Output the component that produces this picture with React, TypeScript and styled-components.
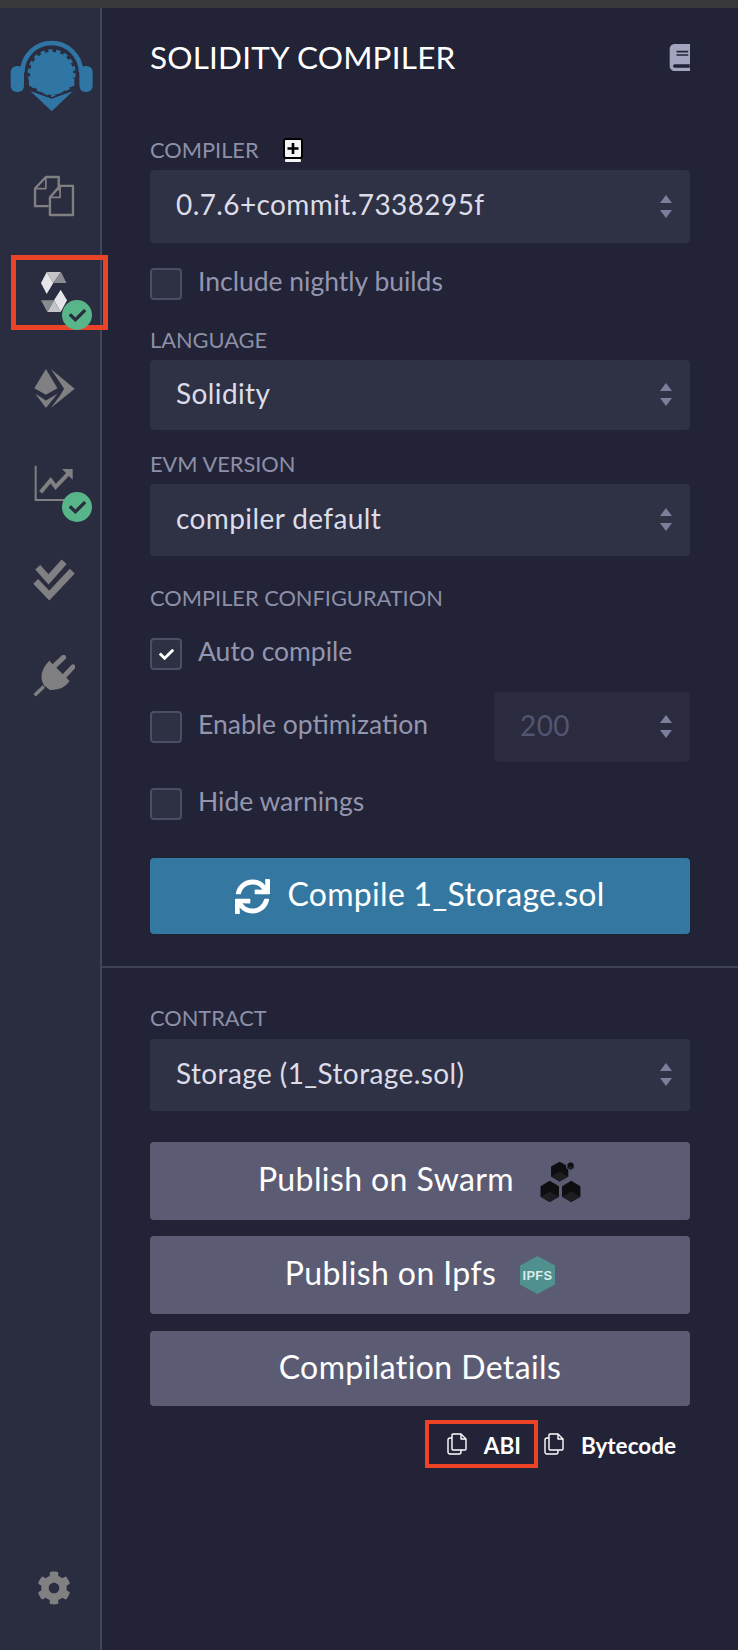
import React from 'react';
import styled, { createGlobalStyle } from 'styled-components';
import { FaBook, FaCheck, FaCog, FaSync } from 'react-icons/fa';

const GlobalStyle = createGlobalStyle`
  html, body {
    margin: 0;
    padding: 0;
    background: #222336;
  }
  * {
    box-sizing: border-box;
  }
`;

const Page = styled.div`
  width: 738px;
  height: 1650px;
  display: flex;
  flex-direction: column;
  overflow: hidden;
  font-family: 'Lato', 'Noto Sans', sans-serif;
`;

const TopStrip = styled.div`
  height: 8px;
  flex: none;
  background: #38383c;
`;

const Body = styled.div`
  flex: 1;
  display: flex;
  min-height: 0;
`;

// Sidebar
const Sidebar = styled.nav`
  width: 102px;
  flex: none;
  display: flex;
  flex-direction: column;
  background: #2a2c3f;
  border-right: 2px solid #44465c;
`;

const LogoWrap = styled.div`
  height: 140px;
  flex: none;
  padding: 27px 0 0 5px;
`;

const NavItem = styled.div`
  position: relative;
  height: 96px;
  flex: none;
  display: flex;
  align-items: center;
  justify-content: center;
  color: #808083;
  padding-left: 8px;
`;

const SettingsItem = styled(NavItem)`
  height: 34px;
  margin: auto 0 45px;
`;

const StatusBadge = styled.span`
  position: absolute;
  left: 62px;
  bottom: 10px;
  width: 30px;
  height: 30px;
  border-radius: 50%;
  background: #58b58a;
  color: #2a2c3f;
  display: flex;
  align-items: center;
  justify-content: center;
`;

const ActiveMark = styled.span`
  position: absolute;
  left: 11px;
  top: 11px;
  width: 97px;
  height: 75px;
  border: 5px solid #ea4328;
`;

// Main panel
const Main = styled.main`
  flex: 1;
  min-width: 0;
  background: #222336;
`;

const Section = styled.section`
  padding: 32px 48px;
  border-bottom: 2px solid #3f4156;
`;

const BottomSection = styled.section`
  padding: 38px 48px 0;
`;

const Header = styled.header`
  height: 34px;
  display: flex;
  align-items: center;
  justify-content: space-between;
  margin-bottom: 64px;
`;

const Title = styled.h1`
  margin: 0;
  font-size: 31.5px;
  font-weight: 400;
  color: #ffffff;
  letter-spacing: 0.2px;
`;

const BookClip = styled.span`
  width: 22px;
  height: 27px;
  overflow: hidden;
  color: #a3a4bf;
  display: block;
`;

const Label = styled.div<{ $top?: number }>`
  height: 24px;
  line-height: 24px;
  font-size: 21.8px;
  color: #8e8fa8;
  margin-top: ${({ $top }) => $top ?? 0}px;
  display: flex;
  align-items: center;
`;

const PlusBox = styled.span`
  width: 20px;
  height: 24px;
  margin-left: 24px;
  display: block;
`;

const SelectBox = styled.div<{ $height: number; $top?: number; $disabled?: boolean; $width?: number }>`
  height: ${({ $height }) => $height}px;
  width: ${({ $width }) => ($width ? `${$width}px` : '100%')};
  flex: none;
  margin-top: ${({ $top }) => $top ?? 8}px;
  padding: 0 18px 0 26px;
  display: flex;
  align-items: center;
  justify-content: space-between;
  background: ${({ $disabled }) => ($disabled ? '#2a2b3e' : '#2f3145')};
  border-radius: 4px;
  color: ${({ $disabled }) => ($disabled ? '#535570' : '#dcdde8')};
  font-size: 28px;
  letter-spacing: 0.4px;
`;

const SelectValue = styled.span`
  margin-bottom: 5px;
`;

const Updown = styled.svg`
  width: 12px;
  height: 24px;
  flex: none;
  fill: #7c7e9c;
`;

const CheckRow = styled.div<{ $top: number }>`
  display: flex;
  align-items: center;
  height: 32px;
  margin-top: ${({ $top }) => $top}px;
`;

const CheckBox = styled.span`
  width: 32px;
  height: 32px;
  flex: none;
  background: #2e3043;
  border: 2px solid #4c4e66;
  border-radius: 4px;
  color: #ffffff;
  display: flex;
  align-items: center;
  justify-content: center;
`;

const CheckText = styled.span`
  height: 26px;
  line-height: 26px;
  margin: 0 0 6px 16px;
  font-size: 26.5px;
  color: #9495ae;
`;

const OptimizeRow = styled.div`
  display: flex;
  align-items: center;
  justify-content: space-between;
  margin-top: 22px;
`;

const OptimizeLabel = styled.div`
  display: flex;
  align-items: center;
`;

const Button = styled.div<{ $height: number; $top: number; $primary?: boolean }>`
  height: ${({ $height }) => $height}px;
  margin-top: ${({ $top }) => $top}px;
  display: flex;
  align-items: center;
  justify-content: center;
  gap: ${({ $primary }) => ($primary ? 17 : 24)}px;
  background: ${({ $primary }) => ($primary ? '#3478a2' : '#5b5c74')};
  border-radius: 4px;
  color: #ffffff;
  font-size: 32px;
  letter-spacing: ${({ $primary }) => ($primary ? 0.3 : 0.4)}px;
`;

const ButtonLabel = styled.span`
  margin-bottom: 5px;
`;

const CopyRow = styled.div`
  display: flex;
  justify-content: flex-end;
  margin-top: 14px;
  padding-right: 14px;
`;

const CopyItem = styled.div<{ $marked?: boolean }>`
  height: 48px;
  display: flex;
  align-items: center;
  padding: 0 ${({ $marked }) => ($marked ? 13 : 0)}px 0 ${({ $marked }) => ($marked ? 18 : 6)}px;
  border: ${({ $marked }) => ($marked ? '4.5px solid #ea4328' : 'none')};
  color: #ffffff;
  font-size: 22.5px;
  font-weight: 700;
`;

const CopyText = styled.span`
  margin: 3px 0 0 17px;
`;

// Drawings
const RemixLogo = () => (
  <svg width='95' height='85' viewBox='0 0 285 255'>
    <path d='M52 112 A88 88 0 0 1 228 112' fill='none' stroke='#2f76a5' strokeWidth='14' />
    <rect x='17' y='93' width='40' height='78' rx='18' fill='#2f76a5' />
    <rect x='223' y='93' width='40' height='78' rx='18' fill='#2f76a5' />
    <circle cx='140' cy='115' r='65' fill='#2f76a5' />
    <circle cx='140' cy='115' r='68' fill='none' stroke='#2f76a5' strokeWidth='8' strokeDasharray='13 10.7' />
    <path d='M72 130 H208 L208 152 L140 178 L72 152 Z' fill='#2f76a5' />
    <path d='M57 150 L140 187 L223 150 V255 H57 Z' fill='#2a2c3f' />
    <path d='M76 168 L140 191 L204 168 L140 229 Z' fill='#2f76a5' />
  </svg>
);

const FilesIcon = () => (
  <svg width='42' height='42' viewBox='100 526 124 124' fill='none' stroke='#808083' strokeWidth='7' strokeLinejoin='round'>
    <path d='M146 618 H106 V566 L138 532 H176 V572' />
    <path d='M138 532 V566 H106' strokeWidth='5' />
    <path d='M150 644 H218 V558 H180 L150 592 Z' />
    <path d='M180 558 V592 H150' strokeWidth='5' />
  </svg>
);

const SolidityIcon = () => (
  <svg width='26' height='40' viewBox='41 272 26 40'>
    <polygon points='41,283 46.7,272 53.3,283 46.7,294' fill='#e6e6ea' />
    <polygon points='46.7,272 61,272 53.3,283' fill='#c4c4c9' />
    <polygon points='61,272 66.5,283 53.3,283' fill='#8a8a91' />
    <polygon points='60.7,289.7 67,300.3 60.7,312 54,300.3' fill='#e6e6ea' />
    <polygon points='47.3,312 60.7,312 54,300.3' fill='#c4c4c9' />
    <polygon points='41,300.3 54,300.3 47.3,312' fill='#8a8a91' />
  </svg>
);

const DeployIcon = () => (
  <svg width='41' height='41' viewBox='100 52 122 124' fill='#808083'>
    <polygon points='100,113 135,55 170,113 135,133' />
    <polygon points='103,130 135,150 170,130 135,173' />
    <polygon points='150,55 222,115 150,173 178,135 190,115 175,92' />
  </svg>
);

const AnalysisIcon = () => (
  <svg width='40' height='38' viewBox='100 346 120 114' fill='none' stroke='#808083'>
    <path d='M105 348 V451 H200' strokeWidth='6' />
    <path d='M120 428 L150 392 L165 412 L203 372' strokeWidth='12' />
    <polygon points='184,358 216,358 216,390' fill='#808083' stroke='none' />
  </svg>
);

const TestIcon = () => (
  <svg width='42' height='42' viewBox='100 628 124 124' fill='none' stroke='#808083' strokeWidth='20'>
    <path d='M114 652 L146 688 L192 636' />
    <path d='M108 694 L148 736 L216 664' />
  </svg>
);

const PluginIcon = () => (
  <svg width='42' height='42' viewBox='100 915 124 124' fill='#808083'>
    <path d='M148 932 L208 992 Q190 1020 150 1018 L132 1004 Q112 970 148 932 Z' />
    <path d='M163 948 L190 922 M192 978 L218 950' stroke='#808083' strokeWidth='15' strokeLinecap='round' />
    <path d='M132 1008 L105 1034' stroke='#808083' strokeWidth='10' />
  </svg>
);

const PlusIcon = () => (
  <svg width='20' height='24' viewBox='0 0 20 24'>
    <rect x='1' y='1' width='18' height='19' rx='2' fill='#f4f4f4' stroke='#000' strokeWidth='2' />
    <rect x='2' y='21' width='16' height='3' rx='1' fill='#f4f4f4' />
    <path d='M10 5 V16 M4.5 10.5 H15.5' stroke='#000' strokeWidth='2.6' />
  </svg>
);

const Arrows = () => (
  <Updown viewBox='0 0 12 24'>
    <polygon points='6,0 12,8 0,8' />
    <polygon points='0,15 12,15 6,23' />
  </Updown>
);

const SwarmIcon = () => {
  const cube = (x: number, y: number, r: number, outlined?: boolean) => (
    <g key={`${x}-${y}`}>
      <polygon
        points={`${x},${y - r} ${x + r * 0.87},${y - r / 2} ${x + r * 0.87},${y + r / 2} ${x},${y + r} ${x - r * 0.87},${y + r / 2} ${x - r * 0.87},${y - r / 2}`}
        fill='#0e0e11'
        stroke={outlined ? '#5b5c74' : 'none'}
        strokeWidth={4}
      />
      <polygon points={`${x},${y} ${x + r * 0.87},${y + r / 2} ${x},${y + r} ${x - r * 0.87},${y + r / 2}`} fill='#1d1d22' />
    </g>
  );
  return (
    <svg width='44' height='41' viewBox='30 33 132 124'>
      {cube(95, 65, 30)}
      {cube(128, 47, 13, true)}
      {cube(65, 125, 32)}
      {cube(130, 125, 32)}
    </svg>
  );
};

const IpfsIcon = () => (
  <svg width='35' height='38' viewBox='0 0 35 38'>
    <polygon points='17.5,0 35,9.5 35,28.5 17.5,38 0,28.5 0,9.5' fill='#50918f' />
    <text x='17.5' y='24' textAnchor='middle' fontSize='13' fontWeight='700' fill='#d9ecec' fontFamily='Liberation Sans, sans-serif' textLength='30' lengthAdjust='spacingAndGlyphs'>
      IPFS
    </text>
  </svg>
);

const CopyIcon = () => (
  <svg width='20' height='22' viewBox='0 0 20 22' fill='#222336' stroke='#ffffff' strokeWidth='1.4' strokeLinejoin='round'>
    <rect x='1' y='5' width='13' height='16' rx='2' />
    <path d='M6 1 H14 L19 6 V16 Q19 17 18 17 H6 Q5 17 5 16 V2 Q5 1 6 1 Z' />
    <path d='M14 1 V6 H19' fill='none' />
  </svg>
);

const App = () => {
  return (
    <Page>
      <GlobalStyle />
      <TopStrip />
      <Body>
        <Sidebar>
          <LogoWrap>
            <RemixLogo />
          </LogoWrap>
          <NavItem>
            <FilesIcon />
          </NavItem>
          <NavItem>
            <SolidityIcon />
            <ActiveMark />
            <StatusBadge>
              <FaCheck size={17} />
            </StatusBadge>
          </NavItem>
          <NavItem>
            <DeployIcon />
          </NavItem>
          <NavItem>
            <AnalysisIcon />
            <StatusBadge>
              <FaCheck size={17} />
            </StatusBadge>
          </NavItem>
          <NavItem>
            <TestIcon />
          </NavItem>
          <NavItem>
            <PluginIcon />
          </NavItem>
          <SettingsItem>
            <FaCog size={34} />
          </SettingsItem>
        </Sidebar>

        <Main>
          <Section>
            <Header>
              <Title>SOLIDITY COMPILER</Title>
              <BookClip>
                <FaBook size={27} />
              </BookClip>
            </Header>

            <Label>
              COMPILER
              <PlusBox>
                <PlusIcon />
              </PlusBox>
            </Label>
            <SelectBox $height={73}>
              <SelectValue>0.7.6+commit.7338295f</SelectValue>
              <Arrows />
            </SelectBox>
            <CheckRow $top={25}>
              <CheckBox />
              <CheckText>Include nightly builds</CheckText>
            </CheckRow>

            <Label $top={28}>LANGUAGE</Label>
            <SelectBox $height={70}>
              <SelectValue>Solidity</SelectValue>
              <Arrows />
            </SelectBox>

            <Label $top={22}>EVM VERSION</Label>
            <SelectBox $height={72}>
              <SelectValue>compiler default</SelectValue>
              <Arrows />
            </SelectBox>

            <Label $top={30}>COMPILER CONFIGURATION</Label>
            <CheckRow $top={28}>
              <CheckBox>
                <FaCheck size={15} />
              </CheckBox>
              <CheckText>Auto compile</CheckText>
            </CheckRow>

            <OptimizeRow>
              <OptimizeLabel>
                <CheckBox />
                <CheckText>Enable optimization</CheckText>
              </OptimizeLabel>
              <SelectBox $height={70} $top={0} $width={196} $disabled>
                <SelectValue>200</SelectValue>
                <Arrows />
              </SelectBox>
            </OptimizeRow>

            <CheckRow $top={26}>
              <CheckBox />
              <CheckText>Hide warnings</CheckText>
            </CheckRow>

            <Button $height={76} $top={38} $primary>
              <FaSync size={35} />
              <ButtonLabel>Compile 1_Storage.sol</ButtonLabel>
            </Button>
          </Section>

          <BottomSection>
            <Label>CONTRACT</Label>
            <SelectBox $height={72} $top={9}>
              <SelectValue>Storage (1_Storage.sol)</SelectValue>
              <Arrows />
            </SelectBox>

            <Button $height={78} $top={31}>
              <ButtonLabel>Publish on Swarm</ButtonLabel>
              <SwarmIcon />
            </Button>
            <Button $height={78} $top={16}>
              <ButtonLabel>Publish on Ipfs</ButtonLabel>
              <IpfsIcon />
            </Button>
            <Button $height={75} $top={17}>
              <ButtonLabel>Compilation Details</ButtonLabel>
            </Button>

            <CopyRow>
              <CopyItem $marked>
                <CopyIcon />
                <CopyText>ABI</CopyText>
              </CopyItem>
              <CopyItem>
                <CopyIcon />
                <CopyText>Bytecode</CopyText>
              </CopyItem>
            </CopyRow>
          </BottomSection>
        </Main>
      </Body>
    </Page>
  );
};

export default App;
